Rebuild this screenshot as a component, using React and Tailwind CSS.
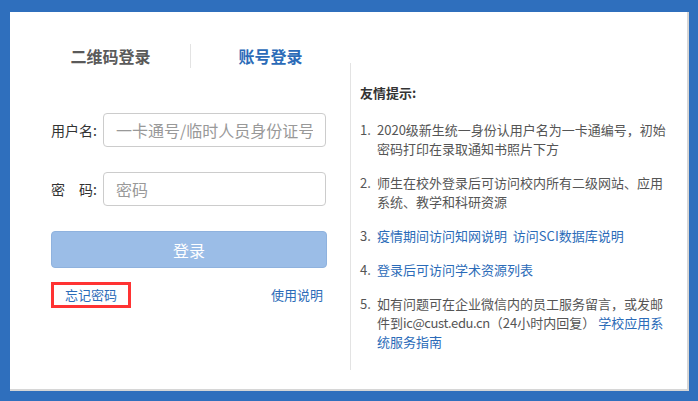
export default function App() {
  const font = { fontFamily: '"Noto Sans CJK SC", "Noto Sans", sans-serif' };
  return (
    <div
      className="w-full h-[401px] bg-[#2f6fbd] pt-[12px] pl-[10px] pr-[9px] pb-[10px]"
      style={font}
    >
      <div className="h-full bg-white border-r-2 border-b-2 border-[#d6d6d6] flex">
        {/* Left: login form */}
        <div className="w-[319px] ml-[21px] mt-[21px] shrink-0">
          <div className="flex h-[46px] items-center">
            <div className="flex-1 text-center text-[16px] font-bold text-[#5a5a5a]">二维码登录</div>
            <div className="w-px h-[24px] bg-[#e3e3e3]" />
            <div className="flex-1 text-center text-[16px] font-bold text-[#2b6bb8]">账号登录</div>
          </div>

          <div className="px-[20px] mt-[34px]">
            <div className="flex items-center">
              <label className="w-[52px] text-[14px] text-[#333] shrink-0">用户名:</label>
              <input
                type="text"
                placeholder="一卡通号/临时人员身份证号"
                className="w-[223px] h-[34px] border border-[#ccc] rounded-[4px] px-[12px] text-[16px] placeholder-[#999] outline-none"
              />
            </div>
            <div className="flex items-center mt-[25px]">
              <label className="w-[52px] text-[14px] text-[#333] shrink-0">密{'\u3000'}码:</label>
              <input
                type="password"
                placeholder="密码"
                className="w-[223px] h-[34px] border border-[#ccc] rounded-[4px] px-[12px] text-[16px] placeholder-[#999] outline-none"
              />
            </div>
            <button className="mt-[25px] w-[276px] h-[37px] rounded-[4px] bg-[#9bbde7] border border-[#8fb2de] text-white text-[16px]">
              登录
            </button>
            <div className="flex items-center justify-between mt-[14px] pr-[7px]">
              <a className="w-[80px] h-[26px] border-[3px] border-[#ff3333] flex items-center justify-center text-[13px] text-[#2b6bb8]">
                忘记密码
              </a>
              <a className="text-[13px] text-[#2b6bb8]">使用说明</a>
            </div>
          </div>
        </div>

        {/* Right: tips */}
        <div className="mt-[51px] h-[307px] border-l border-[#e3e3e3] pl-[9px] pt-[20px]">
          <div className="text-[13px] leading-[20px] font-bold text-[#333]">友情提示:</div>
          <ol className="mt-[17px] text-[13px] leading-[19px] text-[#555] flex flex-col gap-[15px] whitespace-nowrap">
            <li className="flex">
              <span className="w-[17px] shrink-0">1.</span>
              <span>2020级新生统一身份认用户名为一卡通编号，初始<br />密码打印在录取通知书照片下方</span>
            </li>
            <li className="flex">
              <span className="w-[17px] shrink-0">2.</span>
              <span>师生在校外登录后可访问校内所有二级网站、应用<br />系统、教学和科研资源</span>
            </li>
            <li className="flex">
              <span className="w-[17px] shrink-0">3.</span>
              <span className="text-[#2b6bb8]">
                <a>疫情期间访问知网说明</a>{'\u00a0\u00a0'}<a>访问SCI数据库说明</a>
              </span>
            </li>
            <li className="flex">
              <span className="w-[17px] shrink-0">4.</span>
              <span className="text-[#2b6bb8]">
                <a>登录后可访问学术资源列表</a>
              </span>
            </li>
            <li className="flex">
              <span className="w-[17px] shrink-0">5.</span>
              <div className="flex flex-col">
                <span>如有问题可在企业微信内的员工服务留言，或发邮</span>
                <span>
                  件到<span className="tracking-[-0.4px]">ic@cust.edu.cn</span>（24小时内回复）{'\u00a0'}<a className="text-[#2b6bb8]">学校应用系</a>
                </span>
                <a className="text-[#2b6bb8]">统服务指南</a>
              </div>
            </li>
          </ol>
        </div>
      </div>
    </div>
  );
}
